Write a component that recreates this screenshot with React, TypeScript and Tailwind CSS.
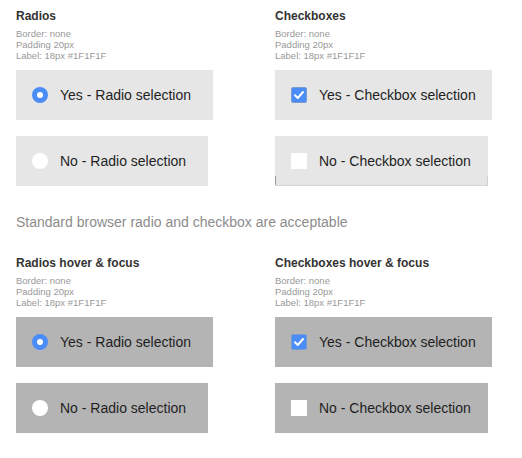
import React from 'react';

type OptionProps = {
  kind: 'radio' | 'checkbox';
  checked: boolean;
  label: string;
  width: string;
  dark?: boolean;
  edge?: boolean;
};

const Radio: React.FC<{ checked: boolean }> = ({ checked }) =>
  checked ? (
    <span className="flex h-4 w-4 items-center justify-center rounded-full bg-[#4a8df7]">
      <span className="h-[6px] w-[6px] rounded-full bg-white" />
    </span>
  ) : (
    <span className="h-4 w-4 rounded-full bg-white" />
  );

const Checkbox: React.FC<{ checked: boolean }> = ({ checked }) =>
  checked ? (
    <span className="flex h-4 w-4 items-center justify-center rounded-[2px] border border-[#7a9ccf] bg-[#4a8df7]">
      <svg width="12" height="12" viewBox="0 0 12 12" fill="none">
        <path d="M2 6.3 L4.8 9 L10 3" stroke="white" strokeWidth="2" strokeLinecap="round" strokeLinejoin="round" />
      </svg>
    </span>
  ) : (
    <span className="h-4 w-4 bg-white" />
  );

const Option: React.FC<OptionProps> = ({ kind, checked, label, width, dark, edge }) => (
  <div
    className={`relative flex h-[50px] items-center gap-3 pl-4 text-[14px] text-[#1f1f1f] ${width} ${
      dark ? 'bg-[#b4b4b4]' : 'bg-[#e6e6e6]'
    }`}
  >
    {kind === 'radio' ? <Radio checked={checked} /> : <Checkbox checked={checked} />}
    <span className="whitespace-nowrap leading-4">{label}</span>
    {edge && (
      <>
        <span className="absolute bottom-0 left-0 h-[10px] w-px bg-[#9a9a9a]" />
        <span className="absolute bottom-0 right-0 h-[10px] w-px bg-[#cfcfcf]" />
        <span className="absolute bottom-0 left-0 h-px w-full bg-[#d4d4d4]" />
      </>
    )}
  </div>
);

const Group: React.FC<{ title: string; kind: 'radio' | 'checkbox'; dark?: boolean; edge?: boolean }> = ({
  title,
  kind,
  dark,
  edge,
}) => {
  const isRadio = kind === 'radio';
  const word = isRadio ? 'Radio' : 'Checkbox';
  return (
    <div className="flex flex-col items-start">
      <h2 className="text-[12px] font-bold leading-[14px] text-[#333333]">{title}</h2>
      <div className="mt-[5px] text-[9.5px] leading-[11px] text-[#999999]">
        <div>Border: none</div>
        <div>Padding 20px</div>
        <div>Label: 18px #1F1F1F</div>
      </div>
      <div className="mt-[9px] flex flex-col items-start gap-4">
        <Option
          kind={kind}
          checked
          label={`Yes - ${word} selection`}
          width={isRadio ? 'w-[197px]' : 'w-[217px]'}
          dark={dark}
        />
        <Option
          kind={kind}
          checked={false}
          label={`No - ${word} selection`}
          width={isRadio ? 'w-[192px]' : 'w-[213px]'}
          dark={dark}
          edge={edge}
        />
      </div>
    </div>
  );
};

const App: React.FC = () => {
  return (
    <div className="min-h-[458px] w-[522px] bg-white px-4 pt-[9px] font-['Liberation_Sans',Arial,sans-serif]">
      <div className="grid grid-cols-[259px_1fr]">
        <Group title="Radios" kind="radio" />
        <Group title="Checkboxes" kind="checkbox" edge />
      </div>
      <p className="mt-7 text-[14px] leading-4 text-[#8c8c8c]">
        Standard browser radio and checkbox are acceptable
      </p>
      <div className="mt-[26px] grid grid-cols-[259px_1fr]">
        <Group title="Radios hover & focus" kind="radio" dark />
        <Group title="Checkboxes hover & focus" kind="checkbox" dark />
      </div>
    </div>
  );
};

export default App;
